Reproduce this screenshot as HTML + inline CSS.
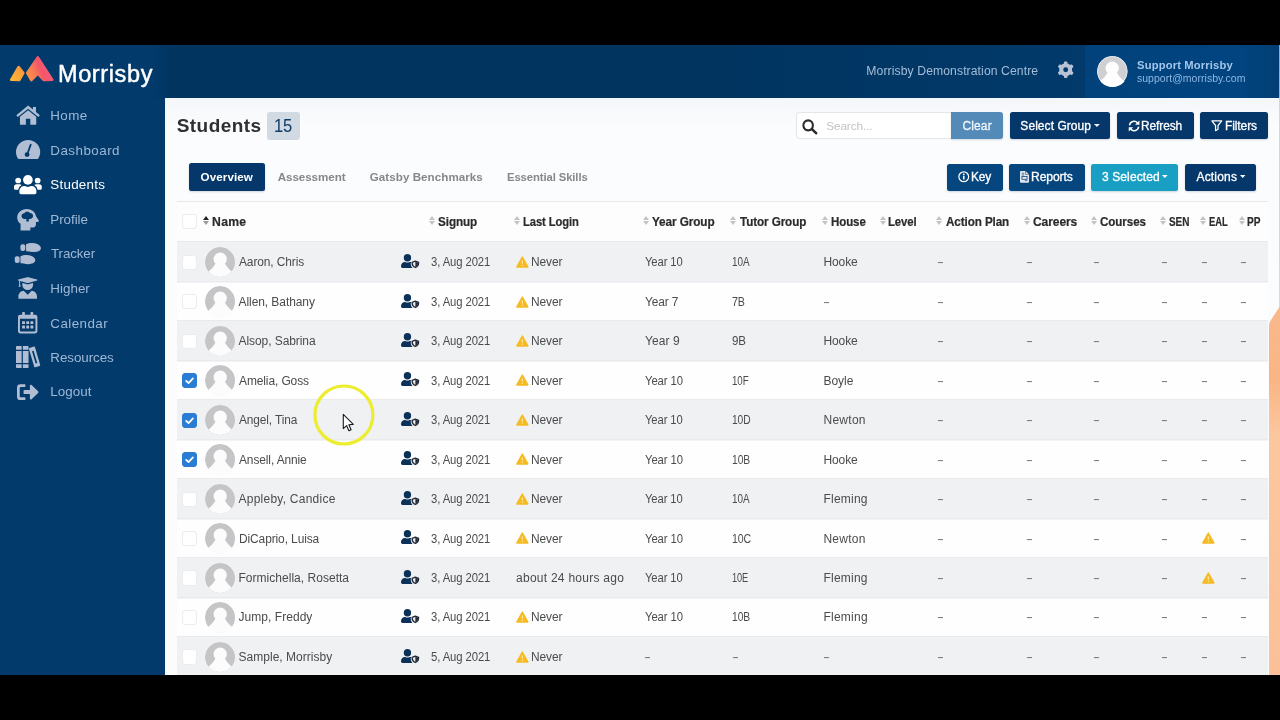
<!DOCTYPE html>
<html lang="en">
<head>
<meta charset="utf-8">
<title>Students - Morrisby</title>
<style>
*{box-sizing:border-box}
html,body{margin:0;padding:0;width:1280px;height:720px;overflow:hidden;background:#000}
body{font-family:"Liberation Sans",sans-serif;font-size:12px;color:#444}
#app{will-change:transform;position:absolute;left:0;top:0;width:1280px;height:720px;overflow:hidden;background:#000}
#app::before{content:"";position:absolute;left:0;top:45px;width:1280px;height:630px;background:#023a6b}
#hdr::before{content:"";position:absolute;left:0;top:45px;width:1280px;height:52.5px;background:linear-gradient(90deg,#023a6b 0,#023a6b 150px,#01345f 175px,#01345f 700px,#013a6b 1084px)}
#user::before{content:"";position:absolute;left:1084.5px;top:45px;width:195.5px;height:52.5px;background:linear-gradient(90deg,#01427c 0,#01447f 80%,#023e74 100%)}
#main::before{content:"";position:absolute;left:165px;top:97.5px;width:1115px;height:577.5px;background:linear-gradient(180deg,#f4f7fa 0,#fbfcfd 30px,#fcfcfd 100%)}
svg{display:block;width:100%;height:100%;overflow:visible}
.ic{position:absolute;display:block;color:#fff}
.tx{transform-origin:0 50%;position:absolute;display:block;height:20px;line-height:20px;white-space:nowrap;margin:0;padding:0}
a.nav{color:#a9bdd6;text-decoration:none}
a.nav .ic{color:#b0bdd2}
a.nav.act,a.nav.act .ic{color:#fff}
.brand{font-size:23.5px;color:#fff;-webkit-text-stroke:0.45px #fff;height:30px;line-height:30px;margin-top:-5px}
.centre{font-size:12.2px;color:#a4bcd8}
.uname{font-size:11.2px;font-weight:bold;color:#a3c6ec}
.umail{font-size:10.5px;color:#8fb8e4}
.navt{font-size:13.4px;color:#9fb8d5}
.navt.act{color:#fff}
.h1{font-size:19px;font-weight:bold;color:#2e3033;height:26px;line-height:26px;margin-top:-3px}
.badge{font-size:18.4px;color:#0e3d69;height:26px;line-height:26px;margin-top:-3px}
#badge{position:absolute;left:267.4px;top:112px;width:32.4px;height:27.6px;border-radius:3px;background:#d1d9e2}
#search{position:absolute;left:796.2px;top:112px;width:155px;height:27.2px;background:#fff;border:1px solid #e3e6ea;border-right:0;border-radius:4px 0 0 4px}
#search .ic{color:#2b2b2b}
.ph{font-size:11.8px;color:#c3c3c3}
.btn{position:absolute;border-radius:2.5px;box-shadow:0 1px 2px rgba(0,30,70,.18)}
.btn.navy{background:#05376a}
.btn.blue{background:#05467f}
.btn.teal{background:#189fc3}
.btn.clear{background:#548ab8;border-radius:0 3px 3px 0}
.bt{font-size:12px;color:#fff;-webkit-text-stroke:0.3px #fff;margin-top:0.4px}
.bt.clr{color:#dcecfb}
.tabt{font-size:11.6px;font-weight:bold;color:#878787}
.tabt.on{color:#fff}
#tbl::before{content:"";position:absolute;left:177px;top:200.6px;width:1091px;height:1px;background:#e6e8eb}
.thead{position:absolute;left:177px;top:201.6px;width:1091px;height:39.6px;background:#fdfdfe}
.tr{position:absolute;left:177px;width:1091px}
.tr{box-shadow:inset 0 1px 0 #e9eaed}
.tr.odd{background:#f0f1f3}
.tr.even{background:#fefefe;box-shadow:inset 0 1.4px 0 #e9eaed}
.th{font-size:12.2px;font-weight:bold;color:#2b2b2b;-webkit-text-stroke:0.2px #2b2b2b}
.td{font-size:12px;color:#4b4b4b}
.td.dash{color:#777}
.cb{position:absolute;display:block;width:15.2px;height:15.2px;border-radius:3px;background:#fff;border:0.8px solid #ececee}
.cb.on{background:#2b7cd3;border-color:#2b7cd3}
.avatar{position:absolute;display:block;border-radius:50%;overflow:hidden}
.sort{position:absolute;display:block;width:6px;height:10px}
.sort i,.sort b{position:absolute;left:0;width:0;height:0;border-style:solid;border-color:transparent;border-width:0 3px 4.2px 3px}
.sort i{top:0;border-bottom-color:#c4c4c4}
.sort b{top:5.4px;border-width:4.2px 3px 0 3px;border-top-color:#c4c4c4}
.sort.on i{border-bottom-color:#222}
.sort.on b{border-top-color:#9a9a9a}
#logo{position:absolute;left:0;top:45px;width:60px;height:50px}
#rstrip{position:absolute;left:1278.6px;top:45px;width:1.4px;height:630px;background:linear-gradient(180deg,#8ea6bf 0,#9fb3c8 52px,#d3d7dc 53px,#d9dce0 100%)}
#orange{position:absolute;left:1266px;top:300px;width:14px;height:375px}
#cursor{position:absolute;left:300px;top:370px;width:100px;height:90px}

#bar1,#bar2{position:absolute;left:0;width:1280px;background:#000;z-index:50}
#bar1{top:0;height:45px}
#bar2{top:675px;height:45px}

</style>
</head>
<body>
<div id="app">
<header id="hdr">
<div id="logo"><svg viewBox="0 45 60 50" preserveAspectRatio="none" ><defs><linearGradient id="lg1" x1="0" y1="1" x2="1" y2="0"><stop offset="0" stop-color="#fcb634"/><stop offset="1" stop-color="#f9933e"/></linearGradient><linearGradient id="lg2" x1="0" y1="0.75" x2="1" y2="0.35"><stop offset="0" stop-color="#fa8f49"/><stop offset="0.3" stop-color="#f87857"/><stop offset="0.55" stop-color="#f4556a"/><stop offset="1" stop-color="#f1627d"/></linearGradient></defs><path d="M11.2 79.8 L18.7 67 L23.3 73 L19.2 80 Z" fill="url(#lg1)" stroke="url(#lg1)" stroke-width="2.6" stroke-linejoin="round"/><path d="M27.2 72.9 L37.8 57.4 L52.2 79.6 L43.6 80 L37.8 73.6 L31.4 80 Z" fill="url(#lg2)" stroke="url(#lg2)" stroke-width="2.6" stroke-linejoin="round"/></svg></div>
<span id="t1" class="tx brand" style="left:57.93px;top:63.50px;letter-spacing:0.633px;">Morrisby</span><span id="t2" class="tx centre" style="left:866.36px;top:60.60px;letter-spacing:0.086px;">Morrisby Demonstration Centre</span><div class="ic" style="left:1056.8px;top:61.4px;width:17.4px;height:17.4px"><svg viewBox="0 0 24 24" preserveAspectRatio="none" ><g color="#b8c4d6"><circle cx="12" cy="12" r="6.200" fill="none" stroke="currentColor" stroke-width="5.600"/><g fill="currentColor"><rect x="9.600" y="0.600" width="4.800" height="5" rx="1.400"/><rect x="9.600" y="18.400" width="4.800" height="5" rx="1.400"/><rect x="9.600" y="0.600" width="4.800" height="5" rx="1.400" transform="rotate(60 12 12)"/><rect x="9.600" y="0.600" width="4.800" height="5" rx="1.400" transform="rotate(120 12 12)"/><rect x="9.600" y="0.600" width="4.800" height="5" rx="1.400" transform="rotate(240 12 12)"/><rect x="9.600" y="0.600" width="4.800" height="5" rx="1.400" transform="rotate(300 12 12)"/></g></g></svg></div>
<div id="user">
<div class="avatar" style="left:1097.3px;top:56.4px;width:30.5px;height:30.5px"><svg viewBox="0 0 30 30" preserveAspectRatio="none" ><circle cx="15" cy="15" r="15" fill="#d0d0d3"/><circle cx="15" cy="15" r="14.5" fill="none" stroke="#dfe5ec" stroke-width="1"/><circle cx="15" cy="12" r="6.5" fill="#fdfdfd"/><path fill="#fdfdfd" d="M10.2 16.6 C8.6 19.6 6 22.4 2.6 25.2 A15 15 0 0 0 27.4 25.2 C24 22.4 21.4 19.6 19.8 16.6 Z"/></svg></div>
<span id="t3" class="tx uname" style="left:1137.09px;top:55.20px;letter-spacing:0.155px;">Support Morrisby</span><span id="t4" class="tx umail" style="left:1136.90px;top:68.00px;letter-spacing:0.033px;">support@morrisby.com</span></div>
</header>
<nav id="side">
<a class="nav"><span class="ic" style="left:15.6px;top:104.9px;width:24.2px;height:19.7px"><svg viewBox="0 0 24 20" preserveAspectRatio="none" ><path fill="currentColor" d="M12 0.6 L16.8 4.6 V2 H19.8 V7.1 L23.7 10.3 L22.2 12.1 L12 3.7 L1.8 12.1 L0.3 10.3 Z"/><path fill="currentColor" d="M3.9 11.9 L12 5.3 L20.1 11.9 V19.2 a0.8 0.8 0 0 1 -0.8 0.8 H14.2 V14 H9.8 V20 H4.7 a0.8 0.8 0 0 1 -0.8 -0.8 Z"/></svg></span><span id="t5" class="tx navt" style="left:50.13px;top:106.20px;letter-spacing:0.473px;">Home</span></a>
<a class="nav"><span class="ic" style="left:15.6px;top:140.2px;width:24.2px;height:19.0px"><svg viewBox="0 0 24 19" preserveAspectRatio="none" ><path fill="currentColor" d="M12 0 A12 12 0 0 1 24 12 c0 2.3 -0.6 4.4 -1.7 6.2 a1.4 1.4 0 0 1 -1.2 0.8 H2.9 a1.4 1.4 0 0 1 -1.2 -0.8 C0.6 16.4 0 14.3 0 12 A12 12 0 0 1 12 0 Z"/><path d="M14.6 4.6 L11.4 13.6" stroke="#023a6b" stroke-width="1.7" stroke-linecap="round" fill="none"/><circle cx="11" cy="14.6" r="2.4" fill="#023a6b"/></svg></span><span id="t6" class="tx navt" style="left:50.30px;top:140.60px;letter-spacing:0.466px;">Dashboard</span></a>
<a class="nav act"><span class="ic" style="left:13.6px;top:175.0px;width:27.8px;height:19.2px"><svg viewBox="0 0 28 19.5" preserveAspectRatio="none" ><circle cx="14" cy="5" r="4.9" fill="currentColor"/><path fill="currentColor" d="M7 19.5 a1.6 1.6 0 0 1 -1.6 -1.6 v-1.6 a5 5 0 0 1 5 -5 h0.4 a7 7 0 0 0 6.4 0 h0.4 a5 5 0 0 1 5 5 v1.6 a1.6 1.6 0 0 1 -1.6 1.6 Z"/><circle cx="4.2" cy="5.6" r="2.9" fill="currentColor"/><circle cx="23.8" cy="5.6" r="2.9" fill="currentColor"/><path fill="currentColor" d="M0 13.6 v-1.4 a2.8 2.8 0 0 1 2.8 -2.8 h2.8 a2.8 2.8 0 0 1 2 0.8 a6.4 6.4 0 0 0 -3.4 4.8 H1.4 a1.4 1.4 0 0 1 -1.4 -1.4 Z"/><path fill="currentColor" d="M28 13.6 v-1.4 a2.8 2.8 0 0 0 -2.8 -2.8 h-2.8 a2.8 2.8 0 0 0 -2 0.8 a6.4 6.4 0 0 1 3.4 4.8 h2.8 a1.4 1.4 0 0 0 1.4 -1.4 Z"/></svg></span><span id="t7" class="tx navt act" style="left:50.37px;top:175.20px;letter-spacing:0.230px;">Students</span></a>
<a class="nav"><span class="ic" style="left:16.5px;top:208.7px;width:22.4px;height:21.5px"><svg viewBox="0 0 22 22" preserveAspectRatio="none" ><path fill="currentColor" d="M9.6 0 C4.3 0 0.2 3.8 0.2 8.6 c0 2.7 1.3 5 3.3 6.6 V22 h9.6 v-3.1 h2.8 c1.5 0 2.7 -1.2 2.7 -2.7 V13.4 h1.6 c1 0 1.6 -1.1 1.1 -1.9 L18.7 7.4 C18 3.1 14.3 0 9.6 0 Z"/><path fill="#023a6b" d="M4.4 7.2 c0 -1.6 1.3 -2.9 2.9 -2.9 c0.5 -1 1.6 -1.5 2.7 -1.5 s2.1 0.5 2.7 1.4 c1.7 0 3.1 1.3 3.1 3 c0 1.700 -1.4 3 -3.100 3 h-1.100 v2.500 h-2.400 v-2.500 h-1.900 c-1.600 0 -2.900 -1.300 -2.900 -3 Z"/></svg></span><span id="t8" class="tx navt" style="left:50.30px;top:209.60px;letter-spacing:-0.051px;">Profile</span></a>
<a class="nav"><span class="ic" style="left:14.0px;top:242.7px;width:27.2px;height:22.1px"><svg viewBox="0 0 28 22" preserveAspectRatio="none" ><path fill="currentColor" d="M12.4 1.200 c3.200 -1.400 8.400 -1.600 11.600 -0.200 c4.200 1.800 5 5.400 1.800 7 c-3 1.500 -7.400 1.200 -9.800 0.500 c-1.400 -0.400 -2.800 -0.400 -3.600 -0.400 Z"/><rect x="6.6" y="1.300" width="5" height="6.6" rx="2" fill="currentColor"/><path fill="currentColor" d="M6.600 13.200 c3.200 -1.400 8.400 -1.600 11.600 -0.200 c4.200 1.800 5 5.400 1.800 7 c-3 1.500 -7.400 1.200 -9.800 0.500 c-1.400 -0.400 -2.800 -0.400 -3.600 -0.400 Z"/><rect x="0.8" y="13.300" width="5" height="6.6" rx="2" fill="currentColor"/></svg></span><span id="t9" class="tx navt" style="left:51.39px;top:244.00px;letter-spacing:-0.100px;transform:scaleX(0.9966);">Tracker</span></a>
<a class="nav"><span class="ic" style="left:17.9px;top:277.4px;width:19.4px;height:21.8px"><svg viewBox="0 0 20 22" preserveAspectRatio="none" ><path fill="currentColor" d="M0.300 2.600 L9.400 0.200 a2.500 2.500 0 0 1 1.200 0 L19.700 2.600 a0.500 0.500 0 0 1 0 1 L10.600 6 a2.500 2.500 0 0 1 -1.200 0 L2.200 4.100 V7.600 L2.800 9.800 H0.600 L1.200 7.600 V3.800 L0.300 3.600 a0.500 0.500 0 0 1 0 -1 Z"/><path fill="currentColor" d="M4.600 6.100 L9.200 7.300 a3.500 3.500 0 0 0 1.600 0 L15.400 6.100 c0.100 0.500 0.200 1 0.200 1.500 a5.600 5.600 0 0 1 -11.200 0 c0 -0.500 0.100 -1 0.200 -1.500 Z"/><path fill="currentColor" d="M0.400 22 v-2.200 c0 -3.100 2.400 -5.600 5.500 -5.800 L10 18 l4.100 -4 c3.100 0.200 5.500 2.700 5.500 5.800 V22 Z"/></svg></span><span id="t10" class="tx navt" style="left:50.30px;top:279.00px;letter-spacing:0.016px;">Higher</span></a>
<a class="nav"><span class="ic" style="left:17.9px;top:312.4px;width:19.4px;height:21.4px"><svg viewBox="0 0 20 22" preserveAspectRatio="none" ><path fill="currentColor" fill-rule="evenodd" d="M2.200 2.800 H17.800 a2.200 2.200 0 0 1 2.200 2.200 V19.800 a2.200 2.200 0 0 1 -2.200 2.200 H2.200 a2.200 2.200 0 0 1 -2.200 -2.200 V5 a2.200 2.200 0 0 1 2.200 -2.200 Z M2 7 V19.400 a0.600 0.600 0 0 0 0.600 0.600 H17.400 a0.600 0.600 0 0 0 0.600 -0.600 V7 Z"/><rect x="4.300" y="0" width="2.800" height="5.400" rx="0.700" fill="currentColor"/><rect x="12.900" y="0" width="2.800" height="5.400" rx="0.700" fill="currentColor"/><rect x="4.200" y="9.4" width="3" height="3" rx="0.400" fill="currentColor"/><rect x="8.500" y="9.4" width="3" height="3" rx="0.400" fill="currentColor"/><rect x="12.800" y="9.4" width="3" height="3" rx="0.400" fill="currentColor"/><rect x="4.200" y="14" width="3" height="3" rx="0.400" fill="currentColor"/><rect x="8.500" y="14" width="3" height="3" rx="0.400" fill="currentColor"/><rect x="12.800" y="14" width="3" height="3" rx="0.400" fill="currentColor"/></svg></span><span id="t11" class="tx navt" style="left:50.30px;top:313.60px;letter-spacing:0.421px;">Calendar</span></a>
<a class="nav"><span class="ic" style="left:15.5px;top:346.2px;width:24.3px;height:22.0px"><svg viewBox="0 0 24 22" preserveAspectRatio="none" ><path fill="currentColor" d="M0 0.800 a0.800 0.800 0 0 1 0.800 -0.800 H5.600 V3.800 H0 Z M0 5 H5.600 V17 H0 Z M0 18.200 H5.600 V22 H0.800 a0.800 0.800 0 0 1 -0.800 -0.800 Z"/><path fill="currentColor" d="M6.800 0 H11.600 a0.800 0.800 0 0 1 0.800 0.800 V3.800 H6.800 Z M6.800 5 H12.400 V17 H6.800 Z M6.800 18.200 H12.400 V21.200 a0.800 0.800 0 0 1 -0.800 0.800 H6.800 Z"/><path fill="currentColor" fill-rule="evenodd" d="M13.300 1.900 L17.700 0.600 a0.800 0.800 0 0 1 1 0.500 L23.900 19 a0.800 0.800 0 0 1 -0.500 1 L19 21.300 a0.800 0.800 0 0 1 -1 -0.500 L12.800 2.900 a0.800 0.800 0 0 1 0.500 -1 Z M15.800 5.200 L19.400 17.600 L21 17.100 L17.400 4.700 Z"/></svg></span><span id="t12" class="tx navt" style="left:50.30px;top:347.80px;letter-spacing:-0.074px;">Resources</span></a>
<a class="nav"><span class="ic" style="left:17.0px;top:383.7px;width:21.5px;height:16.2px"><svg viewBox="0 0 22 16.400" preserveAspectRatio="none" ><path fill="currentColor" d="M8 0.200 H3.400 A3.400 3.400 0 0 0 0 3.600 v9.200 a3.400 3.400 0 0 0 3.400 3.400 H8 a0.600 0.600 0 0 0 0.600 -0.600 v-1.600 a0.600 0.600 0 0 0 -0.600 -0.600 H3.800 a1 1 0 0 1 -1 -1 V4 a1 1 0 0 1 1 -1 H8 a0.600 0.600 0 0 0 0.600 -0.600 V0.800 a0.600 0.600 0 0 0 -0.600 -0.600 Z"/><path fill="currentColor" d="M21.600 7.400 L14.900 1 a1 1 0 0 0 -1.700 0.700 V6.200 H7.600 a0.9 0.9 0 0 0 -0.9 0.9 v2.200 a0.9 0.9 0 0 0 0.9 0.9 H13.200 v4.500 a1 1 0 0 0 1.700 0.700 L21.600 9 a1.100 1.100 0 0 0 0 -1.600 Z"/></svg></span><span id="t13" class="tx navt" style="left:50.30px;top:382.20px;letter-spacing:0.064px;">Logout</span></a>
</nav>
<main id="main">
<span id="t14" class="tx h1" style="left:176.65px;top:116.00px;letter-spacing:0.465px;">Students</span><div id="badge"></div><span id="t15" class="tx badge" style="left:274.30px;top:116.00px;letter-spacing:-0.100px;transform:scaleX(0.8997);">15</span><div id="search"><span class="ic" style="left:5.2px;top:5.6px;width:15.6px;height:15.4px"><svg viewBox="0 0 16 15" preserveAspectRatio="none" ><circle cx="6.300" cy="6.200" r="4.900" fill="none" stroke="currentColor" stroke-width="2.100"/><path d="M10 9.800 L14.600 13.800" stroke="currentColor" stroke-width="2.500" stroke-linecap="round"/></svg></span></div>
<span id="t16" class="tx ph" style="left:826.13px;top:116.00px;letter-spacing:-0.086px;">Search...</span><div class="btn clear" style="left:950.80px;top:112.00px;width:52.50px;height:27.20px"><span id="t17" class="tx bt clr" style="left:11.60px;top:3.40px;letter-spacing:0.146px;">Clear</span></div>
<div class="btn navy" style="left:1009.80px;top:112.00px;width:100.50px;height:27.20px"><span id="t18" class="tx bt" style="left:10.57px;top:3.40px;letter-spacing:0.055px;">Select Group</span><span class="ic" style="left:83.90px;top:12.10px;width:5.80px;height:3px"><svg viewBox="0 0 10 5" preserveAspectRatio="none"><path d="M0 0H10L5 5Z" fill="#fff"/></svg></span></div>
<div class="btn navy" style="left:1116.50px;top:112.00px;width:77.70px;height:27.20px"><span class="ic" style="left:11.00px;top:7.50px;width:12.20px;height:12.00px"><svg viewBox="0 0 16 16" preserveAspectRatio="none" ><path d="M2 7.200 A6 6 0 0 1 12.600 4" fill="none" stroke="currentColor" stroke-width="1.900"/><path fill="currentColor" d="M15 0.600 V6.400 H9.200 Z"/><path d="M14 8.800 A6 6 0 0 1 3.400 12" fill="none" stroke="currentColor" stroke-width="1.900"/><path fill="currentColor" d="M1 15.400 V9.600 H6.800 Z"/></svg></span><span id="t19" class="tx bt" style="left:24.90px;top:3.40px;letter-spacing:-0.100px;transform:scaleX(0.9936);">Refresh</span></div>
<div class="btn navy" style="left:1200.30px;top:112.00px;width:68.00px;height:27.20px"><span class="ic" style="left:10.70px;top:7.70px;width:11.60px;height:11.60px"><svg viewBox="0 0 16 16" preserveAspectRatio="none" ><path d="M1.200 1.200 H14.800 L9.700 7.600 V12.800 L6.300 14.800 V7.600 Z" fill="none" stroke="currentColor" stroke-width="1.700" stroke-linejoin="round"/></svg></span><span id="t20" class="tx bt" style="left:24.60px;top:3.40px;letter-spacing:-0.100px;transform:scaleX(0.9986);">Filters</span></div>
<div class="btn navy tab" style="left:189.30px;top:163.00px;width:75.50px;height:28.00px"><span id="t21" class="tx tabt on" style="left:11.32px;top:3.80px;letter-spacing:0.086px;">Overview</span></div>
<span id="t22" class="tx tabt" style="left:277.69px;top:166.80px;letter-spacing:-0.051px;">Assessment</span><span id="t23" class="tx tabt" style="left:369.80px;top:166.80px;letter-spacing:0.053px;">Gatsby Benchmarks</span><span id="t24" class="tx tabt" style="left:506.78px;top:166.80px;letter-spacing:-0.100px;transform:scaleX(0.9735);">Essential Skills</span>
<div class="btn blue" style="left:947.00px;top:163.60px;width:55.80px;height:27.00px"><span class="ic" style="left:11.00px;top:7.70px;width:11.50px;height:11.50px"><svg viewBox="0 0 16 16" preserveAspectRatio="none" ><circle cx="8" cy="8" r="6.800" fill="none" stroke="currentColor" stroke-width="1.700"/><rect x="6.900" y="6.900" width="2.200" height="4.900" fill="currentColor"/><circle cx="8" cy="4.700" r="1.300" fill="currentColor"/></svg></span><span id="t25" class="tx bt" style="left:24.38px;top:3.20px;letter-spacing:-0.100px;transform:scaleX(0.9899);">Key</span></div>
<div class="btn blue" style="left:1009.00px;top:163.60px;width:75.80px;height:27.00px"><span class="ic" style="left:11.00px;top:7.40px;width:9.00px;height:11.80px"><svg viewBox="0 0 12 16" preserveAspectRatio="none" ><path fill="#dfe8f2" d="M0 1.400 A1.400 1.400 0 0 1 1.400 0 H7.400 L12 4.600 V14.600 A1.400 1.400 0 0 1 10.600 16 H1.400 A1.400 1.400 0 0 1 0 14.600 Z"/><path d="M2.200 3 H5.600 M2.200 5.400 H5.600 M6.400 13 H9.800" stroke="#05376a" stroke-width="0.900"/><rect x="2.600" y="7.600" width="6.800" height="3.600" fill="none" stroke="#05376a" stroke-width="1"/><path d="M7.400 0 V4.600 H12" fill="none" stroke="#05376a" stroke-width="0.700"/></svg></span><span id="t26" class="tx bt" style="left:22.39px;top:3.20px;letter-spacing:-0.100px;transform:scaleX(1.0087);">Reports</span></div>
<div class="btn teal" style="left:1090.80px;top:163.70px;width:87.50px;height:26.90px"><span id="t27" class="tx bt" style="left:11.08px;top:3.10px;letter-spacing:0.133px;">3 Selected</span><span class="ic" style="left:70.90px;top:11.80px;width:5.60px;height:3px"><svg viewBox="0 0 10 5" preserveAspectRatio="none"><path d="M0 0H10L5 5Z" fill="#fff"/></svg></span></div>
<div class="btn navy" style="left:1184.50px;top:163.70px;width:71.80px;height:26.90px"><span id="t28" class="tx bt" style="left:12.03px;top:3.10px;letter-spacing:0.172px;">Actions</span><span class="ic" style="left:55.20px;top:11.80px;width:5.40px;height:3px"><svg viewBox="0 0 10 5" preserveAspectRatio="none"><path d="M0 0H10L5 5Z" fill="#fff"/></svg></span></div>
<div id="tbl">
<div class="thead"><span class="cb" style="left:5.30px;top:12.20px;width:15.2px;height:15.6px"></span><span class="sort on" style="left:26.00px;top:14.40px"><i></i><b></b></span><span id="t29" class="tx th" style="left:35.08px;top:10.20px;letter-spacing:0.280px;">Name</span><span class="sort" style="left:252.00px;top:14.40px"><i></i><b></b></span><span id="t30" class="tx th" style="left:260.91px;top:10.20px;letter-spacing:-0.100px;transform:scaleX(0.9628);">Signup</span><span class="sort" style="left:337.00px;top:14.40px"><i></i><b></b></span><span id="t31" class="tx th" style="left:346.05px;top:10.20px;letter-spacing:-0.100px;transform:scaleX(0.9205);">Last Login</span><span class="sort" style="left:466.00px;top:14.40px"><i></i><b></b></span><span id="t32" class="tx th" style="left:475.24px;top:10.20px;letter-spacing:-0.100px;transform:scaleX(0.9672);">Year Group</span><span class="sort" style="left:553.00px;top:14.40px"><i></i><b></b></span><span id="t33" class="tx th" style="left:563.41px;top:10.20px;letter-spacing:-0.100px;transform:scaleX(0.9593);">Tutor Group</span><span class="sort" style="left:645.00px;top:14.40px"><i></i><b></b></span><span id="t34" class="tx th" style="left:654.36px;top:10.20px;letter-spacing:-0.100px;transform:scaleX(0.9440);">House</span><span class="sort" style="left:703.00px;top:14.40px"><i></i><b></b></span><span id="t35" class="tx th" style="left:711.30px;top:10.20px;letter-spacing:-0.100px;transform:scaleX(0.9344);">Level</span><span class="sort" style="left:759.20px;top:14.40px"><i></i><b></b></span><span id="t36" class="tx th" style="left:768.73px;top:10.20px;letter-spacing:-0.100px;transform:scaleX(0.9576);">Action Plan</span><span class="sort" style="left:847.00px;top:14.40px"><i></i><b></b></span><span id="t37" class="tx th" style="left:856.34px;top:10.20px;letter-spacing:-0.100px;transform:scaleX(0.9892);">Careers</span><span class="sort" style="left:914.20px;top:14.40px"><i></i><b></b></span><span id="t38" class="tx th" style="left:923.21px;top:10.20px;letter-spacing:-0.100px;transform:scaleX(0.9554);">Courses</span><span class="sort" style="left:983.00px;top:14.40px"><i></i><b></b></span><span id="t39" class="tx th" style="left:991.64px;top:10.20px;letter-spacing:-0.100px;transform:scaleX(0.8178);">SEN</span><span class="sort" style="left:1023.20px;top:14.40px"><i></i><b></b></span><span id="t40" class="tx th" style="left:1032.14px;top:10.20px;letter-spacing:-0.100px;transform:scaleX(0.7705);">EAL</span><span class="sort" style="left:1061.50px;top:14.40px"><i></i><b></b></span><span id="t41" class="tx th" style="left:1070.15px;top:10.20px;letter-spacing:-0.100px;transform:scaleX(0.8259);">PP</span></div>
<div class="tr odd" style="top:241.20px;height:39.50px"><span class="cb" style="left:5.10px;top:13.55px"></span><span class="avatar g" style="left:27.60px;top:5.75px;width:30.4px;height:30.4px"><svg viewBox="0 0 30 30" preserveAspectRatio="none" ><circle cx="15" cy="15" r="15" fill="#c5c5c7"/><circle cx="15" cy="12" r="6.5" fill="#fcfcfd"/><path fill="#fcfcfd" d="M10.2 16.6 C8.6 19.6 6 22.4 2.6 25.2 L1 31 H29 L27.4 25.2 C24 22.4 21.4 19.6 19.8 16.6 Z"/></svg></span><span id="t42" class="tx td" style="left:61.53px;top:11.05px;letter-spacing:-0.100px;transform:scaleX(0.9951);">Aaron, Chris</span><span class="ic" style="left:223.90px;top:12.85px;width:18.40px;height:14.00px"><svg viewBox="0 0 20 15" preserveAspectRatio="none" ><g color="#0b3159"><circle cx="7" cy="4" r="4" fill="currentColor"/><path fill="currentColor" d="M0 13.4 v-0.6 c0 -2.3 1.9 -4.2 4.2 -4.2 h0.5 a5.4 5.4 0 0 0 4.6 0 h0.5 c0.5 0 0.9 0.1 1.3 0.2 c-0.3 0.4 -0.5 0.9 -0.5 1.4 c0 1.9 0.7 3.6 1.9 4.8 H1.6 A1.6 1.6 0 0 1 0 13.4 Z"/><path fill="#e9ebef" stroke="#222a36" stroke-width="1.5" stroke-linejoin="round" d="M15.600 7.600 l3.500 1.400 c0 3 -1.500 4.700 -3.500 5.400 c-2 -0.700 -3.500 -2.400 -3.500 -5.400 Z"/><path fill="#222a36" d="M15.600 8.200 l3 1.200 c-0.100 2.400 -1.400 3.800 -3 4.400 Z"/></g></svg></span><span id="t43" class="tx td" style="left:254.22px;top:11.05px;letter-spacing:-0.100px;transform:scaleX(0.9403);">3, Aug 2021</span><span class="ic" style="left:338.60px;top:14.85px;width:12.70px;height:11.80px"><svg viewBox="0 0 18 16" preserveAspectRatio="none" ><path d="M9 1.400 L16.800 14.800 H1.200 Z" fill="#f6bb22" stroke="#f6bb22" stroke-width="2" stroke-linejoin="round"/><rect x="8.100" y="5.600" width="1.800" height="5" rx="0.600" fill="#fbe39a"/><circle cx="9" cy="12.700" r="1.100" fill="#fbe39a"/></svg></span><span id="t44" class="tx td" style="left:353.68px;top:11.05px;letter-spacing:-0.100px;transform:scaleX(0.9956);">Never</span><span id="t45" class="tx td" style="left:467.90px;top:11.05px;letter-spacing:-0.100px;transform:scaleX(0.9368);">Year 10</span><span id="t46" class="tx td" style="left:554.75px;top:11.05px;letter-spacing:-0.100px;transform:scaleX(0.8277);">10A</span><span id="t47" class="tx td" style="left:646.45px;top:11.05px;letter-spacing:-0.087px;">Hooke</span><span id="t48" class="tx td dash" style="left:760.49px;top:11.05px;transform:scaleX(1.7376);">-</span><span id="t49" class="tx td dash" style="left:848.77px;top:11.05px;transform:scaleX(1.7364);">-</span><span id="t50" class="tx td dash" style="left:915.64px;top:11.05px;transform:scaleX(1.7331);">-</span><span id="t51" class="tx td dash" style="left:983.69px;top:11.05px;transform:scaleX(1.7331);">-</span><span id="t52" class="tx td dash" style="left:1024.49px;top:11.05px;transform:scaleX(1.7376);">-</span><span id="t53" class="tx td dash" style="left:1062.77px;top:11.05px;transform:scaleX(1.7364);">-</span></div>
<div class="tr even" style="top:280.70px;height:39.50px"><span class="cb" style="left:5.10px;top:13.52px"></span><span class="avatar g" style="left:27.60px;top:5.72px;width:30.4px;height:30.4px"><svg viewBox="0 0 30 30" preserveAspectRatio="none" ><circle cx="15" cy="15" r="15" fill="#c5c5c7"/><circle cx="15" cy="12" r="6.5" fill="#fcfcfd"/><path fill="#fcfcfd" d="M10.2 16.6 C8.6 19.6 6 22.4 2.6 25.2 L1 31 H29 L27.4 25.2 C24 22.4 21.4 19.6 19.8 16.6 Z"/></svg></span><span id="t54" class="tx td" style="left:61.53px;top:11.02px;letter-spacing:-0.072px;">Allen, Bathany</span><span class="ic" style="left:223.90px;top:12.82px;width:18.40px;height:14.00px"><svg viewBox="0 0 20 15" preserveAspectRatio="none" ><g color="#0b3159"><circle cx="7" cy="4" r="4" fill="currentColor"/><path fill="currentColor" d="M0 13.4 v-0.6 c0 -2.3 1.9 -4.2 4.2 -4.2 h0.5 a5.4 5.4 0 0 0 4.6 0 h0.5 c0.5 0 0.9 0.1 1.3 0.2 c-0.3 0.4 -0.5 0.9 -0.5 1.4 c0 1.9 0.7 3.6 1.9 4.8 H1.6 A1.6 1.6 0 0 1 0 13.4 Z"/><path fill="#e9ebef" stroke="#222a36" stroke-width="1.5" stroke-linejoin="round" d="M15.600 7.600 l3.500 1.400 c0 3 -1.500 4.700 -3.500 5.400 c-2 -0.700 -3.500 -2.400 -3.500 -5.400 Z"/><path fill="#222a36" d="M15.600 8.200 l3 1.200 c-0.100 2.400 -1.400 3.800 -3 4.400 Z"/></g></svg></span><span id="t55" class="tx td" style="left:254.22px;top:11.02px;letter-spacing:-0.100px;transform:scaleX(0.9403);">3, Aug 2021</span><span class="ic" style="left:338.60px;top:14.82px;width:12.70px;height:11.80px"><svg viewBox="0 0 18 16" preserveAspectRatio="none" ><path d="M9 1.400 L16.800 14.800 H1.200 Z" fill="#f6bb22" stroke="#f6bb22" stroke-width="2" stroke-linejoin="round"/><rect x="8.100" y="5.600" width="1.800" height="5" rx="0.600" fill="#fbe39a"/><circle cx="9" cy="12.700" r="1.100" fill="#fbe39a"/></svg></span><span id="t56" class="tx td" style="left:353.68px;top:11.02px;letter-spacing:-0.100px;transform:scaleX(0.9958);">Never</span><span id="t57" class="tx td" style="left:467.90px;top:11.02px;letter-spacing:-0.100px;transform:scaleX(0.9909);">Year 7</span><span id="t58" class="tx td" style="left:554.75px;top:11.02px;letter-spacing:-0.100px;transform:scaleX(0.8916);">7B</span><span id="t59" class="tx td dash" style="left:645.50px;top:11.02px;transform:scaleX(1.7378);">-</span><span id="t60" class="tx td dash" style="left:760.49px;top:11.02px;transform:scaleX(1.7378);">-</span><span id="t61" class="tx td dash" style="left:848.77px;top:11.02px;transform:scaleX(1.7355);">-</span><span id="t62" class="tx td dash" style="left:915.64px;top:11.02px;transform:scaleX(1.7323);">-</span><span id="t63" class="tx td dash" style="left:983.69px;top:11.02px;transform:scaleX(1.7323);">-</span><span id="t64" class="tx td dash" style="left:1024.49px;top:11.02px;transform:scaleX(1.7378);">-</span><span id="t65" class="tx td dash" style="left:1062.77px;top:11.02px;transform:scaleX(1.7355);">-</span></div>
<div class="tr odd" style="top:320.20px;height:39.50px"><span class="cb" style="left:5.10px;top:13.49px"></span><span class="avatar g" style="left:27.60px;top:5.69px;width:30.4px;height:30.4px"><svg viewBox="0 0 30 30" preserveAspectRatio="none" ><circle cx="15" cy="15" r="15" fill="#c5c5c7"/><circle cx="15" cy="12" r="6.5" fill="#fcfcfd"/><path fill="#fcfcfd" d="M10.2 16.6 C8.6 19.6 6 22.4 2.6 25.2 L1 31 H29 L27.4 25.2 C24 22.4 21.4 19.6 19.8 16.6 Z"/></svg></span><span id="t66" class="tx td" style="left:61.53px;top:10.99px;letter-spacing:-0.071px;">Alsop, Sabrina</span><span class="ic" style="left:223.90px;top:12.79px;width:18.40px;height:14.00px"><svg viewBox="0 0 20 15" preserveAspectRatio="none" ><g color="#0b3159"><circle cx="7" cy="4" r="4" fill="currentColor"/><path fill="currentColor" d="M0 13.4 v-0.6 c0 -2.3 1.9 -4.2 4.2 -4.2 h0.5 a5.4 5.4 0 0 0 4.6 0 h0.5 c0.5 0 0.9 0.1 1.3 0.2 c-0.3 0.4 -0.5 0.9 -0.5 1.4 c0 1.9 0.7 3.6 1.9 4.8 H1.6 A1.6 1.6 0 0 1 0 13.4 Z"/><path fill="#e9ebef" stroke="#222a36" stroke-width="1.5" stroke-linejoin="round" d="M15.600 7.600 l3.500 1.400 c0 3 -1.500 4.700 -3.500 5.400 c-2 -0.700 -3.500 -2.400 -3.500 -5.400 Z"/><path fill="#222a36" d="M15.600 8.200 l3 1.200 c-0.100 2.400 -1.400 3.800 -3 4.400 Z"/></g></svg></span><span id="t67" class="tx td" style="left:254.22px;top:10.99px;letter-spacing:-0.100px;transform:scaleX(0.9403);">3, Aug 2021</span><span class="ic" style="left:338.60px;top:14.79px;width:12.70px;height:11.80px"><svg viewBox="0 0 18 16" preserveAspectRatio="none" ><path d="M9 1.400 L16.800 14.800 H1.200 Z" fill="#f6bb22" stroke="#f6bb22" stroke-width="2" stroke-linejoin="round"/><rect x="8.100" y="5.600" width="1.800" height="5" rx="0.600" fill="#fbe39a"/><circle cx="9" cy="12.700" r="1.100" fill="#fbe39a"/></svg></span><span id="t68" class="tx td" style="left:353.68px;top:10.99px;letter-spacing:-0.100px;transform:scaleX(0.9956);">Never</span><span id="t69" class="tx td" style="left:467.90px;top:10.99px;letter-spacing:0.083px;">Year 9</span><span id="t70" class="tx td" style="left:554.75px;top:10.99px;letter-spacing:-0.100px;transform:scaleX(0.9611);">9B</span><span id="t71" class="tx td" style="left:646.45px;top:10.99px;letter-spacing:-0.087px;">Hooke</span><span id="t72" class="tx td dash" style="left:760.49px;top:10.99px;transform:scaleX(1.7376);">-</span><span id="t73" class="tx td dash" style="left:848.77px;top:10.99px;transform:scaleX(1.7364);">-</span><span id="t74" class="tx td dash" style="left:915.64px;top:10.99px;transform:scaleX(1.7331);">-</span><span id="t75" class="tx td dash" style="left:983.69px;top:10.99px;transform:scaleX(1.7331);">-</span><span id="t76" class="tx td dash" style="left:1024.49px;top:10.99px;transform:scaleX(1.7376);">-</span><span id="t77" class="tx td dash" style="left:1062.77px;top:10.99px;transform:scaleX(1.7364);">-</span></div>
<div class="tr even" style="top:359.70px;height:39.50px"><span class="cb on" style="left:5.10px;top:13.46px"><svg viewBox="0 0 15 15" preserveAspectRatio="none" ><path d="M3.600 7.800 L6.300 10.400 L11.300 4.900" fill="none" stroke="#fff" stroke-width="2" stroke-linecap="round" stroke-linejoin="round"/></svg></span><span class="avatar g" style="left:27.60px;top:5.66px;width:30.4px;height:30.4px"><svg viewBox="0 0 30 30" preserveAspectRatio="none" ><circle cx="15" cy="15" r="15" fill="#c5c5c7"/><circle cx="15" cy="12" r="6.5" fill="#fcfcfd"/><path fill="#fcfcfd" d="M10.2 16.6 C8.6 19.6 6 22.4 2.6 25.2 L1 31 H29 L27.4 25.2 C24 22.4 21.4 19.6 19.8 16.6 Z"/></svg></span><span id="t78" class="tx td" style="left:61.53px;top:10.96px;letter-spacing:-0.100px;transform:scaleX(0.9966);">Amelia, Goss</span><span class="ic" style="left:223.90px;top:12.76px;width:18.40px;height:14.00px"><svg viewBox="0 0 20 15" preserveAspectRatio="none" ><g color="#0b3159"><circle cx="7" cy="4" r="4" fill="currentColor"/><path fill="currentColor" d="M0 13.4 v-0.6 c0 -2.3 1.9 -4.2 4.2 -4.2 h0.5 a5.4 5.4 0 0 0 4.6 0 h0.5 c0.5 0 0.9 0.1 1.3 0.2 c-0.3 0.4 -0.5 0.9 -0.5 1.4 c0 1.9 0.7 3.6 1.9 4.8 H1.6 A1.6 1.6 0 0 1 0 13.4 Z"/><path fill="#e9ebef" stroke="#222a36" stroke-width="1.5" stroke-linejoin="round" d="M15.600 7.600 l3.500 1.400 c0 3 -1.500 4.700 -3.500 5.400 c-2 -0.700 -3.500 -2.400 -3.500 -5.400 Z"/><path fill="#222a36" d="M15.600 8.200 l3 1.200 c-0.100 2.400 -1.400 3.800 -3 4.400 Z"/></g></svg></span><span id="t79" class="tx td" style="left:254.22px;top:10.96px;letter-spacing:-0.100px;transform:scaleX(0.9403);">3, Aug 2021</span><span class="ic" style="left:338.60px;top:14.76px;width:12.70px;height:11.80px"><svg viewBox="0 0 18 16" preserveAspectRatio="none" ><path d="M9 1.400 L16.800 14.800 H1.200 Z" fill="#f6bb22" stroke="#f6bb22" stroke-width="2" stroke-linejoin="round"/><rect x="8.100" y="5.600" width="1.800" height="5" rx="0.600" fill="#fbe39a"/><circle cx="9" cy="12.700" r="1.100" fill="#fbe39a"/></svg></span><span id="t80" class="tx td" style="left:353.68px;top:10.96px;letter-spacing:-0.100px;transform:scaleX(0.9958);">Never</span><span id="t81" class="tx td" style="left:467.90px;top:10.96px;letter-spacing:-0.100px;transform:scaleX(0.9398);">Year 10</span><span id="t82" class="tx td" style="left:554.75px;top:10.96px;letter-spacing:-0.100px;transform:scaleX(0.8119);">10F</span><span id="t83" class="tx td" style="left:646.45px;top:10.96px;letter-spacing:-0.039px;">Boyle</span><span id="t84" class="tx td dash" style="left:760.49px;top:10.96px;transform:scaleX(1.7378);">-</span><span id="t85" class="tx td dash" style="left:848.77px;top:10.96px;transform:scaleX(1.7355);">-</span><span id="t86" class="tx td dash" style="left:915.64px;top:10.96px;transform:scaleX(1.7323);">-</span><span id="t87" class="tx td dash" style="left:983.69px;top:10.96px;transform:scaleX(1.7323);">-</span><span id="t88" class="tx td dash" style="left:1024.49px;top:10.96px;transform:scaleX(1.7378);">-</span><span id="t89" class="tx td dash" style="left:1062.77px;top:10.96px;transform:scaleX(1.7355);">-</span></div>
<div class="tr odd" style="top:399.20px;height:39.50px"><span class="cb on" style="left:5.10px;top:13.43px"><svg viewBox="0 0 15 15" preserveAspectRatio="none" ><path d="M3.600 7.800 L6.300 10.400 L11.300 4.900" fill="none" stroke="#fff" stroke-width="2" stroke-linecap="round" stroke-linejoin="round"/></svg></span><span class="avatar g" style="left:27.60px;top:5.63px;width:30.4px;height:30.4px"><svg viewBox="0 0 30 30" preserveAspectRatio="none" ><circle cx="15" cy="15" r="15" fill="#c5c5c7"/><circle cx="15" cy="12" r="6.5" fill="#fcfcfd"/><path fill="#fcfcfd" d="M10.2 16.6 C8.6 19.6 6 22.4 2.6 25.2 L1 31 H29 L27.4 25.2 C24 22.4 21.4 19.6 19.8 16.6 Z"/></svg></span><span id="t90" class="tx td" style="left:61.53px;top:10.93px;letter-spacing:-0.100px;transform:scaleX(0.9891);">Angel, Tina</span><span class="ic" style="left:223.90px;top:12.73px;width:18.40px;height:14.00px"><svg viewBox="0 0 20 15" preserveAspectRatio="none" ><g color="#0b3159"><circle cx="7" cy="4" r="4" fill="currentColor"/><path fill="currentColor" d="M0 13.4 v-0.6 c0 -2.3 1.9 -4.2 4.2 -4.2 h0.5 a5.4 5.4 0 0 0 4.6 0 h0.5 c0.5 0 0.9 0.1 1.3 0.2 c-0.3 0.4 -0.5 0.9 -0.5 1.4 c0 1.9 0.7 3.6 1.9 4.8 H1.6 A1.6 1.6 0 0 1 0 13.4 Z"/><path fill="#e9ebef" stroke="#222a36" stroke-width="1.5" stroke-linejoin="round" d="M15.600 7.600 l3.500 1.400 c0 3 -1.500 4.700 -3.500 5.400 c-2 -0.700 -3.500 -2.400 -3.500 -5.400 Z"/><path fill="#222a36" d="M15.600 8.200 l3 1.200 c-0.100 2.400 -1.400 3.800 -3 4.400 Z"/></g></svg></span><span id="t91" class="tx td" style="left:254.22px;top:10.93px;letter-spacing:-0.100px;transform:scaleX(0.9403);">3, Aug 2021</span><span class="ic" style="left:338.60px;top:14.73px;width:12.70px;height:11.80px"><svg viewBox="0 0 18 16" preserveAspectRatio="none" ><path d="M9 1.400 L16.800 14.800 H1.200 Z" fill="#f6bb22" stroke="#f6bb22" stroke-width="2" stroke-linejoin="round"/><rect x="8.100" y="5.600" width="1.800" height="5" rx="0.600" fill="#fbe39a"/><circle cx="9" cy="12.700" r="1.100" fill="#fbe39a"/></svg></span><span id="t92" class="tx td" style="left:353.68px;top:10.93px;letter-spacing:-0.100px;transform:scaleX(0.9956);">Never</span><span id="t93" class="tx td" style="left:467.90px;top:10.93px;letter-spacing:-0.100px;transform:scaleX(0.9368);">Year 10</span><span id="t94" class="tx td" style="left:554.75px;top:10.93px;letter-spacing:-0.100px;transform:scaleX(0.8527);">10D</span><span id="t95" class="tx td" style="left:646.45px;top:10.93px;letter-spacing:0.283px;">Newton</span><span id="t96" class="tx td dash" style="left:760.49px;top:10.93px;transform:scaleX(1.7376);">-</span><span id="t97" class="tx td dash" style="left:848.77px;top:10.93px;transform:scaleX(1.7364);">-</span><span id="t98" class="tx td dash" style="left:915.64px;top:10.93px;transform:scaleX(1.7331);">-</span><span id="t99" class="tx td dash" style="left:983.69px;top:10.93px;transform:scaleX(1.7331);">-</span><span id="t100" class="tx td dash" style="left:1024.49px;top:10.93px;transform:scaleX(1.7376);">-</span><span id="t101" class="tx td dash" style="left:1062.77px;top:10.93px;transform:scaleX(1.7364);">-</span></div>
<div class="tr even" style="top:438.70px;height:39.50px"><span class="cb on" style="left:5.10px;top:13.40px"><svg viewBox="0 0 15 15" preserveAspectRatio="none" ><path d="M3.600 7.800 L6.300 10.400 L11.300 4.900" fill="none" stroke="#fff" stroke-width="2" stroke-linecap="round" stroke-linejoin="round"/></svg></span><span class="avatar g" style="left:27.60px;top:5.60px;width:30.4px;height:30.4px"><svg viewBox="0 0 30 30" preserveAspectRatio="none" ><circle cx="15" cy="15" r="15" fill="#c5c5c7"/><circle cx="15" cy="12" r="6.5" fill="#fcfcfd"/><path fill="#fcfcfd" d="M10.2 16.6 C8.6 19.6 6 22.4 2.6 25.2 L1 31 H29 L27.4 25.2 C24 22.4 21.4 19.6 19.8 16.6 Z"/></svg></span><span id="t102" class="tx td" style="left:61.53px;top:10.90px;letter-spacing:-0.100px;transform:scaleX(0.9937);">Ansell, Annie</span><span class="ic" style="left:223.90px;top:12.70px;width:18.40px;height:14.00px"><svg viewBox="0 0 20 15" preserveAspectRatio="none" ><g color="#0b3159"><circle cx="7" cy="4" r="4" fill="currentColor"/><path fill="currentColor" d="M0 13.4 v-0.6 c0 -2.3 1.9 -4.2 4.2 -4.2 h0.5 a5.4 5.4 0 0 0 4.6 0 h0.5 c0.5 0 0.9 0.1 1.3 0.2 c-0.3 0.4 -0.5 0.9 -0.5 1.4 c0 1.9 0.7 3.6 1.9 4.8 H1.6 A1.6 1.6 0 0 1 0 13.4 Z"/><path fill="#e9ebef" stroke="#222a36" stroke-width="1.5" stroke-linejoin="round" d="M15.600 7.600 l3.500 1.400 c0 3 -1.500 4.700 -3.500 5.400 c-2 -0.700 -3.500 -2.400 -3.500 -5.400 Z"/><path fill="#222a36" d="M15.600 8.200 l3 1.200 c-0.100 2.400 -1.400 3.800 -3 4.400 Z"/></g></svg></span><span id="t103" class="tx td" style="left:254.22px;top:10.90px;letter-spacing:-0.100px;transform:scaleX(0.9403);">3, Aug 2021</span><span class="ic" style="left:338.60px;top:14.70px;width:12.70px;height:11.80px"><svg viewBox="0 0 18 16" preserveAspectRatio="none" ><path d="M9 1.400 L16.800 14.800 H1.200 Z" fill="#f6bb22" stroke="#f6bb22" stroke-width="2" stroke-linejoin="round"/><rect x="8.100" y="5.600" width="1.800" height="5" rx="0.600" fill="#fbe39a"/><circle cx="9" cy="12.700" r="1.100" fill="#fbe39a"/></svg></span><span id="t104" class="tx td" style="left:353.68px;top:10.90px;letter-spacing:-0.100px;transform:scaleX(0.9958);">Never</span><span id="t105" class="tx td" style="left:467.90px;top:10.90px;letter-spacing:-0.100px;transform:scaleX(0.9398);">Year 10</span><span id="t106" class="tx td" style="left:554.75px;top:10.90px;letter-spacing:-0.100px;transform:scaleX(0.8569);">10B</span><span id="t107" class="tx td" style="left:646.45px;top:10.90px;letter-spacing:-0.082px;">Hooke</span><span id="t108" class="tx td dash" style="left:760.49px;top:10.90px;transform:scaleX(1.7378);">-</span><span id="t109" class="tx td dash" style="left:848.77px;top:10.90px;transform:scaleX(1.7355);">-</span><span id="t110" class="tx td dash" style="left:915.64px;top:10.90px;transform:scaleX(1.7323);">-</span><span id="t111" class="tx td dash" style="left:983.69px;top:10.90px;transform:scaleX(1.7323);">-</span><span id="t112" class="tx td dash" style="left:1024.49px;top:10.90px;transform:scaleX(1.7378);">-</span><span id="t113" class="tx td dash" style="left:1062.77px;top:10.90px;transform:scaleX(1.7355);">-</span></div>
<div class="tr odd" style="top:478.20px;height:39.50px"><span class="cb" style="left:5.10px;top:13.37px"></span><span class="avatar g" style="left:27.60px;top:5.57px;width:30.4px;height:30.4px"><svg viewBox="0 0 30 30" preserveAspectRatio="none" ><circle cx="15" cy="15" r="15" fill="#c5c5c7"/><circle cx="15" cy="12" r="6.5" fill="#fcfcfd"/><path fill="#fcfcfd" d="M10.2 16.6 C8.6 19.6 6 22.4 2.6 25.2 L1 31 H29 L27.4 25.2 C24 22.4 21.4 19.6 19.8 16.6 Z"/></svg></span><span id="t114" class="tx td" style="left:61.53px;top:10.87px;letter-spacing:0.241px;">Appleby, Candice</span><span class="ic" style="left:223.90px;top:12.67px;width:18.40px;height:14.00px"><svg viewBox="0 0 20 15" preserveAspectRatio="none" ><g color="#0b3159"><circle cx="7" cy="4" r="4" fill="currentColor"/><path fill="currentColor" d="M0 13.4 v-0.6 c0 -2.3 1.9 -4.2 4.2 -4.2 h0.5 a5.4 5.4 0 0 0 4.6 0 h0.5 c0.5 0 0.9 0.1 1.3 0.2 c-0.3 0.4 -0.5 0.9 -0.5 1.4 c0 1.9 0.7 3.6 1.9 4.8 H1.6 A1.6 1.6 0 0 1 0 13.4 Z"/><path fill="#e9ebef" stroke="#222a36" stroke-width="1.5" stroke-linejoin="round" d="M15.600 7.600 l3.500 1.400 c0 3 -1.500 4.700 -3.500 5.400 c-2 -0.700 -3.500 -2.400 -3.500 -5.400 Z"/><path fill="#222a36" d="M15.600 8.200 l3 1.200 c-0.100 2.400 -1.400 3.800 -3 4.400 Z"/></g></svg></span><span id="t115" class="tx td" style="left:254.22px;top:10.87px;letter-spacing:-0.100px;transform:scaleX(0.9403);">3, Aug 2021</span><span class="ic" style="left:338.60px;top:14.67px;width:12.70px;height:11.80px"><svg viewBox="0 0 18 16" preserveAspectRatio="none" ><path d="M9 1.400 L16.800 14.800 H1.200 Z" fill="#f6bb22" stroke="#f6bb22" stroke-width="2" stroke-linejoin="round"/><rect x="8.100" y="5.600" width="1.800" height="5" rx="0.600" fill="#fbe39a"/><circle cx="9" cy="12.700" r="1.100" fill="#fbe39a"/></svg></span><span id="t116" class="tx td" style="left:353.68px;top:10.87px;letter-spacing:-0.100px;transform:scaleX(0.9956);">Never</span><span id="t117" class="tx td" style="left:467.90px;top:10.87px;letter-spacing:-0.100px;transform:scaleX(0.9368);">Year 10</span><span id="t118" class="tx td" style="left:554.75px;top:10.87px;letter-spacing:-0.100px;transform:scaleX(0.8277);">10A</span><span id="t119" class="tx td" style="left:646.45px;top:10.87px;letter-spacing:0.237px;">Fleming</span><span id="t120" class="tx td dash" style="left:760.49px;top:10.87px;transform:scaleX(1.7376);">-</span><span id="t121" class="tx td dash" style="left:848.77px;top:10.87px;transform:scaleX(1.7364);">-</span><span id="t122" class="tx td dash" style="left:915.64px;top:10.87px;transform:scaleX(1.7331);">-</span><span id="t123" class="tx td dash" style="left:983.69px;top:10.87px;transform:scaleX(1.7331);">-</span><span id="t124" class="tx td dash" style="left:1024.49px;top:10.87px;transform:scaleX(1.7376);">-</span><span id="t125" class="tx td dash" style="left:1062.77px;top:10.87px;transform:scaleX(1.7364);">-</span></div>
<div class="tr even" style="top:517.70px;height:39.50px"><span class="cb" style="left:5.10px;top:13.34px"></span><span class="avatar g" style="left:27.60px;top:5.54px;width:30.4px;height:30.4px"><svg viewBox="0 0 30 30" preserveAspectRatio="none" ><circle cx="15" cy="15" r="15" fill="#c5c5c7"/><circle cx="15" cy="12" r="6.5" fill="#fcfcfd"/><path fill="#fcfcfd" d="M10.2 16.6 C8.6 19.6 6 22.4 2.6 25.2 L1 31 H29 L27.4 25.2 C24 22.4 21.4 19.6 19.8 16.6 Z"/></svg></span><span id="t126" class="tx td" style="left:61.53px;top:10.84px;letter-spacing:-0.100px;transform:scaleX(0.9952);">DiCaprio, Luisa</span><span class="ic" style="left:223.90px;top:12.64px;width:18.40px;height:14.00px"><svg viewBox="0 0 20 15" preserveAspectRatio="none" ><g color="#0b3159"><circle cx="7" cy="4" r="4" fill="currentColor"/><path fill="currentColor" d="M0 13.4 v-0.6 c0 -2.3 1.9 -4.2 4.2 -4.2 h0.5 a5.4 5.4 0 0 0 4.6 0 h0.5 c0.5 0 0.9 0.1 1.3 0.2 c-0.3 0.4 -0.5 0.9 -0.5 1.4 c0 1.9 0.7 3.6 1.9 4.8 H1.6 A1.6 1.6 0 0 1 0 13.4 Z"/><path fill="#e9ebef" stroke="#222a36" stroke-width="1.5" stroke-linejoin="round" d="M15.600 7.600 l3.500 1.400 c0 3 -1.500 4.700 -3.500 5.400 c-2 -0.700 -3.500 -2.400 -3.500 -5.400 Z"/><path fill="#222a36" d="M15.600 8.200 l3 1.200 c-0.100 2.400 -1.400 3.800 -3 4.400 Z"/></g></svg></span><span id="t127" class="tx td" style="left:254.22px;top:10.84px;letter-spacing:-0.100px;transform:scaleX(0.9403);">3, Aug 2021</span><span class="ic" style="left:338.60px;top:14.64px;width:12.70px;height:11.80px"><svg viewBox="0 0 18 16" preserveAspectRatio="none" ><path d="M9 1.400 L16.800 14.800 H1.200 Z" fill="#f6bb22" stroke="#f6bb22" stroke-width="2" stroke-linejoin="round"/><rect x="8.100" y="5.600" width="1.800" height="5" rx="0.600" fill="#fbe39a"/><circle cx="9" cy="12.700" r="1.100" fill="#fbe39a"/></svg></span><span id="t128" class="tx td" style="left:353.68px;top:10.84px;letter-spacing:-0.100px;transform:scaleX(0.9958);">Never</span><span id="t129" class="tx td" style="left:467.90px;top:10.84px;letter-spacing:-0.100px;transform:scaleX(0.9398);">Year 10</span><span id="t130" class="tx td" style="left:554.75px;top:10.84px;letter-spacing:-0.100px;transform:scaleX(0.8805);">10C</span><span id="t131" class="tx td" style="left:646.45px;top:10.84px;letter-spacing:0.266px;">Newton</span><span id="t132" class="tx td dash" style="left:760.49px;top:10.84px;transform:scaleX(1.7378);">-</span><span id="t133" class="tx td dash" style="left:848.77px;top:10.84px;transform:scaleX(1.7355);">-</span><span id="t134" class="tx td dash" style="left:915.64px;top:10.84px;transform:scaleX(1.7323);">-</span><span id="t135" class="tx td dash" style="left:983.69px;top:10.84px;transform:scaleX(1.7323);">-</span><span class="ic" style="left:1024.60px;top:14.64px;width:12.70px;height:11.80px"><svg viewBox="0 0 18 16" preserveAspectRatio="none" ><path d="M9 1.400 L16.800 14.800 H1.200 Z" fill="#f6bb22" stroke="#f6bb22" stroke-width="2" stroke-linejoin="round"/><rect x="8.100" y="5.600" width="1.800" height="5" rx="0.600" fill="#fbe39a"/><circle cx="9" cy="12.700" r="1.100" fill="#fbe39a"/></svg></span><span id="t136" class="tx td dash" style="left:1062.77px;top:10.84px;transform:scaleX(1.7355);">-</span></div>
<div class="tr odd" style="top:557.20px;height:39.50px"><span class="cb" style="left:5.10px;top:13.31px"></span><span class="avatar g" style="left:27.60px;top:5.51px;width:30.4px;height:30.4px"><svg viewBox="0 0 30 30" preserveAspectRatio="none" ><circle cx="15" cy="15" r="15" fill="#c5c5c7"/><circle cx="15" cy="12" r="6.5" fill="#fcfcfd"/><path fill="#fcfcfd" d="M10.2 16.6 C8.6 19.6 6 22.4 2.6 25.2 L1 31 H29 L27.4 25.2 C24 22.4 21.4 19.6 19.8 16.6 Z"/></svg></span><span id="t137" class="tx td" style="left:61.53px;top:10.81px;letter-spacing:0.025px;">Formichella, Rosetta</span><span class="ic" style="left:223.90px;top:12.61px;width:18.40px;height:14.00px"><svg viewBox="0 0 20 15" preserveAspectRatio="none" ><g color="#0b3159"><circle cx="7" cy="4" r="4" fill="currentColor"/><path fill="currentColor" d="M0 13.4 v-0.6 c0 -2.3 1.9 -4.2 4.2 -4.2 h0.5 a5.4 5.4 0 0 0 4.6 0 h0.5 c0.5 0 0.9 0.1 1.3 0.2 c-0.3 0.4 -0.5 0.9 -0.5 1.4 c0 1.9 0.7 3.6 1.9 4.8 H1.6 A1.6 1.6 0 0 1 0 13.4 Z"/><path fill="#e9ebef" stroke="#222a36" stroke-width="1.5" stroke-linejoin="round" d="M15.600 7.600 l3.500 1.400 c0 3 -1.500 4.700 -3.500 5.400 c-2 -0.700 -3.500 -2.400 -3.500 -5.400 Z"/><path fill="#222a36" d="M15.600 8.200 l3 1.200 c-0.100 2.400 -1.400 3.800 -3 4.400 Z"/></g></svg></span><span id="t138" class="tx td" style="left:254.22px;top:10.81px;letter-spacing:-0.100px;transform:scaleX(0.9403);">3, Aug 2021</span><span id="t139" class="tx td" style="left:339.04px;top:10.81px;letter-spacing:0.258px;">about 24 hours ago</span><span id="t140" class="tx td" style="left:467.90px;top:10.81px;letter-spacing:-0.100px;transform:scaleX(0.9368);">Year 10</span><span id="t141" class="tx td" style="left:554.75px;top:10.81px;letter-spacing:-0.100px;transform:scaleX(0.7689);">10E</span><span id="t142" class="tx td" style="left:646.45px;top:10.81px;letter-spacing:0.237px;">Fleming</span><span id="t143" class="tx td dash" style="left:760.49px;top:10.81px;transform:scaleX(1.7376);">-</span><span id="t144" class="tx td dash" style="left:848.77px;top:10.81px;transform:scaleX(1.7364);">-</span><span id="t145" class="tx td dash" style="left:915.64px;top:10.81px;transform:scaleX(1.7331);">-</span><span id="t146" class="tx td dash" style="left:983.69px;top:10.81px;transform:scaleX(1.7331);">-</span><span class="ic" style="left:1024.60px;top:14.61px;width:12.70px;height:11.80px"><svg viewBox="0 0 18 16" preserveAspectRatio="none" ><path d="M9 1.400 L16.800 14.800 H1.200 Z" fill="#f6bb22" stroke="#f6bb22" stroke-width="2" stroke-linejoin="round"/><rect x="8.100" y="5.600" width="1.800" height="5" rx="0.600" fill="#fbe39a"/><circle cx="9" cy="12.700" r="1.100" fill="#fbe39a"/></svg></span><span id="t147" class="tx td dash" style="left:1062.77px;top:10.81px;transform:scaleX(1.7364);">-</span></div>
<div class="tr even" style="top:596.70px;height:39.50px"><span class="cb" style="left:5.10px;top:13.28px"></span><span class="avatar g" style="left:27.60px;top:5.48px;width:30.4px;height:30.4px"><svg viewBox="0 0 30 30" preserveAspectRatio="none" ><circle cx="15" cy="15" r="15" fill="#c5c5c7"/><circle cx="15" cy="12" r="6.5" fill="#fcfcfd"/><path fill="#fcfcfd" d="M10.2 16.6 C8.6 19.6 6 22.4 2.6 25.2 L1 31 H29 L27.4 25.2 C24 22.4 21.4 19.6 19.8 16.6 Z"/></svg></span><span id="t148" class="tx td" style="left:61.53px;top:10.78px;letter-spacing:0.045px;">Jump, Freddy</span><span class="ic" style="left:223.90px;top:12.58px;width:18.40px;height:14.00px"><svg viewBox="0 0 20 15" preserveAspectRatio="none" ><g color="#0b3159"><circle cx="7" cy="4" r="4" fill="currentColor"/><path fill="currentColor" d="M0 13.4 v-0.6 c0 -2.3 1.9 -4.2 4.2 -4.2 h0.5 a5.4 5.4 0 0 0 4.6 0 h0.5 c0.5 0 0.9 0.1 1.3 0.2 c-0.3 0.4 -0.5 0.9 -0.5 1.4 c0 1.9 0.7 3.6 1.9 4.8 H1.6 A1.6 1.6 0 0 1 0 13.4 Z"/><path fill="#e9ebef" stroke="#222a36" stroke-width="1.5" stroke-linejoin="round" d="M15.600 7.600 l3.500 1.400 c0 3 -1.500 4.700 -3.500 5.400 c-2 -0.700 -3.500 -2.400 -3.500 -5.400 Z"/><path fill="#222a36" d="M15.600 8.200 l3 1.200 c-0.100 2.400 -1.400 3.800 -3 4.400 Z"/></g></svg></span><span id="t149" class="tx td" style="left:254.22px;top:10.78px;letter-spacing:-0.100px;transform:scaleX(0.9403);">3, Aug 2021</span><span class="ic" style="left:338.60px;top:14.58px;width:12.70px;height:11.80px"><svg viewBox="0 0 18 16" preserveAspectRatio="none" ><path d="M9 1.400 L16.800 14.800 H1.200 Z" fill="#f6bb22" stroke="#f6bb22" stroke-width="2" stroke-linejoin="round"/><rect x="8.100" y="5.600" width="1.800" height="5" rx="0.600" fill="#fbe39a"/><circle cx="9" cy="12.700" r="1.100" fill="#fbe39a"/></svg></span><span id="t150" class="tx td" style="left:353.68px;top:10.78px;letter-spacing:-0.100px;transform:scaleX(0.9958);">Never</span><span id="t151" class="tx td" style="left:467.90px;top:10.78px;letter-spacing:-0.100px;transform:scaleX(0.9398);">Year 10</span><span id="t152" class="tx td" style="left:554.75px;top:10.78px;letter-spacing:-0.100px;transform:scaleX(0.8569);">10B</span><span id="t153" class="tx td" style="left:646.45px;top:10.78px;letter-spacing:0.243px;">Fleming</span><span id="t154" class="tx td dash" style="left:760.49px;top:10.78px;transform:scaleX(1.7378);">-</span><span id="t155" class="tx td dash" style="left:848.77px;top:10.78px;transform:scaleX(1.7355);">-</span><span id="t156" class="tx td dash" style="left:915.64px;top:10.78px;transform:scaleX(1.7323);">-</span><span id="t157" class="tx td dash" style="left:983.69px;top:10.78px;transform:scaleX(1.7323);">-</span><span id="t158" class="tx td dash" style="left:1024.49px;top:10.78px;transform:scaleX(1.7378);">-</span><span id="t159" class="tx td dash" style="left:1062.77px;top:10.78px;transform:scaleX(1.7355);">-</span></div>
<div class="tr odd" style="top:636.20px;height:39.50px"><span class="cb" style="left:5.10px;top:13.25px"></span><span class="avatar g" style="left:27.60px;top:5.45px;width:30.4px;height:30.4px"><svg viewBox="0 0 30 30" preserveAspectRatio="none" ><circle cx="15" cy="15" r="15" fill="#c5c5c7"/><circle cx="15" cy="12" r="6.5" fill="#fcfcfd"/><path fill="#fcfcfd" d="M10.2 16.6 C8.6 19.6 6 22.4 2.6 25.2 L1 31 H29 L27.4 25.2 C24 22.4 21.4 19.6 19.8 16.6 Z"/></svg></span><span id="t160" class="tx td" style="left:61.53px;top:10.75px;letter-spacing:0.024px;">Sample, Morrisby</span><span class="ic" style="left:223.90px;top:12.55px;width:18.40px;height:14.00px"><svg viewBox="0 0 20 15" preserveAspectRatio="none" ><g color="#0b3159"><circle cx="7" cy="4" r="4" fill="currentColor"/><path fill="currentColor" d="M0 13.4 v-0.6 c0 -2.3 1.9 -4.2 4.2 -4.2 h0.5 a5.4 5.4 0 0 0 4.6 0 h0.5 c0.5 0 0.9 0.1 1.3 0.2 c-0.3 0.4 -0.5 0.9 -0.5 1.4 c0 1.9 0.7 3.6 1.9 4.8 H1.6 A1.6 1.6 0 0 1 0 13.4 Z"/><path fill="#e9ebef" stroke="#222a36" stroke-width="1.5" stroke-linejoin="round" d="M15.600 7.600 l3.500 1.400 c0 3 -1.500 4.700 -3.500 5.400 c-2 -0.700 -3.500 -2.400 -3.500 -5.400 Z"/><path fill="#222a36" d="M15.600 8.200 l3 1.200 c-0.100 2.400 -1.400 3.800 -3 4.400 Z"/></g></svg></span><span id="t161" class="tx td" style="left:254.22px;top:10.75px;letter-spacing:-0.100px;transform:scaleX(0.9419);">5, Aug 2021</span><span class="ic" style="left:338.60px;top:14.55px;width:12.70px;height:11.80px"><svg viewBox="0 0 18 16" preserveAspectRatio="none" ><path d="M9 1.400 L16.800 14.800 H1.200 Z" fill="#f6bb22" stroke="#f6bb22" stroke-width="2" stroke-linejoin="round"/><rect x="8.100" y="5.600" width="1.800" height="5" rx="0.600" fill="#fbe39a"/><circle cx="9" cy="12.700" r="1.100" fill="#fbe39a"/></svg></span><span id="t162" class="tx td" style="left:353.68px;top:10.75px;letter-spacing:-0.100px;transform:scaleX(0.9956);">Never</span><span id="t163" class="tx td dash" style="left:467.49px;top:10.75px;transform:scaleX(1.7376);">-</span><span id="t164" class="tx td dash" style="left:554.77px;top:10.75px;transform:scaleX(1.7364);">-</span><span id="t165" class="tx td dash" style="left:645.50px;top:10.75px;transform:scaleX(1.7376);">-</span><span id="t166" class="tx td dash" style="left:760.49px;top:10.75px;transform:scaleX(1.7376);">-</span><span id="t167" class="tx td dash" style="left:848.77px;top:10.75px;transform:scaleX(1.7364);">-</span><span id="t168" class="tx td dash" style="left:915.64px;top:10.75px;transform:scaleX(1.7331);">-</span><span id="t169" class="tx td dash" style="left:983.69px;top:10.75px;transform:scaleX(1.7331);">-</span><span id="t170" class="tx td dash" style="left:1024.49px;top:10.75px;transform:scaleX(1.7376);">-</span><span id="t171" class="tx td dash" style="left:1062.77px;top:10.75px;transform:scaleX(1.7364);">-</span></div>
</div>
<div id="rstrip"></div><div id="orange"><svg viewBox="0 0 14 375" preserveAspectRatio="none" ><defs><linearGradient id="og" x1="0" y1="0" x2="0" y2="1"><stop offset="0" stop-color="#f9b98c"/><stop offset="0.2" stop-color="#fab585"/><stop offset="0.35" stop-color="#fcc79f"/><stop offset="1" stop-color="#fbc097"/></linearGradient></defs><path d="M14 6 L4 21.6 Q3 23.4 3 25.4 V375 H14 Z" fill="url(#og)"/></svg></div>
<div id="cursor"><svg viewBox="0 0 100 90" preserveAspectRatio="none" ><circle cx="43.900" cy="45" r="29" fill="none" stroke="#ecec25" stroke-width="3.200" opacity="0.950"/><path d="M43.300 44.400 V58.600 L46.600 55.600 L48.900 60.700 L51.100 59.700 L48.900 54.700 L53.300 54.400 Z" fill="#fff" stroke="#1a1a1a" stroke-width="1.100" stroke-linejoin="round"/></svg></div>
</main>
<div id="bar1"></div><div id="bar2"></div>
</div>
</body>
</html>
